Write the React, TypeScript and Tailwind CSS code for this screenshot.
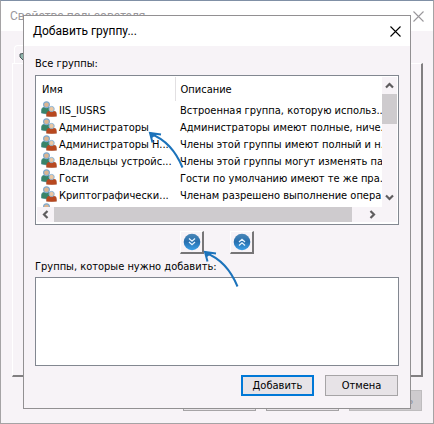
import React from 'react';

const groups = [
    { name: 'IIS_IUSRS', description: 'Встроенная группа, которую использ...' },
    { name: 'Администраторы', description: 'Администраторы имеют полные, ниче...' },
    { name: 'Администраторы H...', description: 'Члены этой группы имеют полный и н...' },
    { name: 'Владельцы устройс...', description: 'Члены этой группы могут изменять па...' },
    { name: 'Гости', description: 'Гости по умолчанию имеют те же пра...' },
    { name: 'Криптографически...', description: 'Членам разрешено выполнение опера...' },
    { name: '', description: '' },
];

const CloseIcon = () => (
    <svg viewBox="0 0 11 11" className="h-[11px] w-[11px]" fill="none" stroke="currentColor" strokeWidth="1.1">
        <path d="M.5 .5 10.5 10.5M10.5 .5 .5 10.5" />
    </svg>
);

const GroupIcon = () => (
    <svg viewBox="0 0 16 16" className="block h-4 w-4 shrink-0">
        <path d="M.3 12V9.500q.2-3.500 3.500-3.500h4q2.500 0 2.500 3v3.500q-5 1-10-.5z" fill="#388468" stroke="#4f8f9c" strokeWidth=".5" />
        <circle cx="5.500" cy="3.700" r="2.900" fill="#dcb591" stroke="#7fabd0" strokeWidth="1.200" />
        <path d="M5.500 15.300v-2q.3-3.300 3.500-3.300h3.500q3 0 3 3.300v2q-4.500.8-10 0z" fill="#b8481f" stroke="#a85030" strokeWidth=".5" />
        <circle cx="10.600" cy="8" r="2.600" fill="#ecc7a2" stroke="#8bb4d6" strokeWidth="1" />
    </svg>
);

const Chevron = ({ d }: { d: string }) => (
    <svg viewBox="0 0 9 9" className="h-[9px] w-[9px]" fill="none" stroke="#5f5d5f" strokeWidth="2.200">
        <path d={d} />
    </svg>
);

const MoveButton = ({ label, up = false }: { label: string; up?: boolean }) => (
    <button
        type="button"
        aria-label={label}
        className="flex h-[23px] w-6 items-center justify-center border-t border-r-2 border-b-2 border-l border-t-white border-r-[#777577] border-b-[#777577] border-l-white bg-[#f7f3f7]"
    >
        <svg viewBox="0 0 18 18" className="h-[18px] w-[18px] shrink-0">
            <defs>
                <linearGradient id={up ? 'ball-up' : 'ball-down'} x1="0" y1="0" x2="0" y2="1">
                    <stop offset="0" stopColor="#4b88b8" />
                    <stop offset=".48" stopColor="#2870ae" />
                    <stop offset="1" stopColor="#3ba0e8" />
                </linearGradient>
            </defs>
            <circle cx="9" cy="9" r="8.300" fill={`url(#${up ? 'ball-up' : 'ball-down'})`} />
            <path
                d={up ? 'M6 9 9 6.300 12 9M6 12.500 9 9.800 12 12.500' : 'M6 5.500 9 8.200 12 5.500M6 9 9 11.700 12 9'}
                fill="none"
                stroke="#e6f4ff"
                strokeWidth="1.300"
            />
        </svg>
    </button>
);

const Arrow = ({ className }: { className: string }) => (
    <svg viewBox="0 0 36 38" className={`pointer-events-none absolute h-[38px] w-9 ${className}`} fill="none" stroke="#1c73bb" strokeWidth="2">
        <path d="M3 3Q24 11 34.500 36.500" />
        <path d="M13 3.500 2 2 4.500 11.500" />
        <path d="M1.500 1.500 9 3 4 7z" fill="#1c73bb" stroke="none" />
    </svg>
);

// The properties window that stays disabled behind the dialog
const PropertiesWindow = () => (
    <div aria-hidden="true" className="absolute inset-0 flex flex-col border border-[#a5a3a5] border-t-[#8090a6] bg-[#f7f3f7]">
        <div className="flex h-[30px] shrink-0 items-center justify-between bg-white pr-[9px] pl-[9px] text-[#9a989c]">
            <span className="font-[Roboto,sans-serif] text-[12px]">Свойства пользователя</span>
            <CloseIcon />
        </div>
        <div className="flex h-8 shrink-0 items-end pl-[13px]">
            <div className="flex h-[18px] w-16 items-end rounded-t-sm border-t border-l border-white pl-1">
                <svg viewBox="0 0 10 10" className="h-[10px] w-[10px]">
                    <path d="M1 1 4 .5 9 6 6 9 1 4z" fill="#8fb5ac" stroke="#4b5558" />
                </svg>
            </div>
        </div>
        <div className="mr-[10px] ml-[11px] flex-1 border-t border-r-2 border-b-2 border-l border-t-white border-r-[#817f81] border-b-[#817f81] border-l-white" />
        <div className="mt-[13px] mr-[11px] mb-3 flex h-[21px] justify-end gap-[10px]">
            <div className="w-[73px] border border-[#a6a4a6] bg-[#e7e3e7]" />
            <div className="w-[73px] border border-[#a6a4a6] bg-[#e7e3e7]" />
            <div className="flex w-[73px] items-center justify-end border border-[#bebcbe] bg-[#cecbce] pr-2 text-[#8a8f9f]">ь</div>
        </div>
    </div>
);

const App = () => {
    return (
        <div className="relative min-h-screen overflow-hidden font-['DejaVu_Sans_Condensed','DejaVu_Sans',sans-serif] text-[11px] leading-[17px] text-black">
            <PropertiesWindow />

            <div role="dialog" aria-labelledby="dialog-title" className="relative mx-[23px] my-[15px] border border-[#929092] bg-[#f7f3f7]">
                <header className="flex h-[30px] items-center justify-between bg-white pr-[9px] pl-[9px]">
                    <h1 id="dialog-title" className="font-[Roboto,sans-serif] text-[12px]">Добавить группу...</h1>
                    <button type="button" aria-label="Закрыть">
                        <CloseIcon />
                    </button>
                </header>

                <div className="px-[11px] pt-[9px]">
                    <h2 id="all-groups" className="mb-[3px] h-[17px]">Все группы:</h2>
                    <div className="border border-[#828790] bg-white px-px pt-px pb-[2px]">
                        <div className="flex h-[130px]">
                            <div className="min-w-0 flex-1 overflow-hidden">
                                <table aria-labelledby="all-groups" className="w-full table-fixed text-left whitespace-nowrap">
                                    <thead>
                                        <tr className="h-6">
                                            <th className="w-[138px] border-r border-[#e2e0e2] p-0 pl-[5px] font-normal">Имя</th>
                                            <th className="p-0 pl-[5px] font-normal">Описание</th>
                                        </tr>
                                    </thead>
                                    <tbody className="leading-[19px]">
                                        {groups.map((group, i) => (
                                            <tr key={i} className="h-[17px]">
                                                <td className="p-0 pl-1">
                                                    <div className="flex h-[17px] gap-[2px]">
                                                        <GroupIcon />
                                                        <span>{group.name}</span>
                                                    </div>
                                                </td>
                                                <td className="p-0 pl-[5px]">
                                                    <div className="h-[17px]">{group.description}</div>
                                                </td>
                                            </tr>
                                        ))}
                                    </tbody>
                                </table>
                            </div>
                            <div className="flex w-[15px] flex-col items-center bg-[#f7f3f7]">
                                <div className="flex h-[17px] items-center"><Chevron d="M1 6.500 4.500 3 8 6.500" /></div>
                                <div className="h-[30px] w-full bg-[#cecbce]" />
                                <div className="mt-auto flex h-[19px] items-center"><Chevron d="M1 2.500 4.500 6 8 2.500" /></div>
                            </div>
                        </div>
                        <div className="flex h-[15px] items-center bg-[#f7f3f7] pr-[20px]">
                            <div className="flex w-[17px] justify-center"><Chevron d="M6.500 1 3 4.500 6.500 8" /></div>
                            <div className="h-full flex-1 bg-[#cecbce]" />
                            <div className="flex w-[25px] justify-end"><Chevron d="M2.500 1 6 4.500 2.500 8" /></div>
                        </div>
                    </div>

                    <div className="mt-[6px] flex justify-center gap-[26px]">
                        <MoveButton label="Добавить выбранную группу" />
                        <MoveButton label="Убрать выбранную группу" up />
                    </div>

                    <label htmlFor="selected" className="mt-1 mb-[2px] block">Группы, которые нужно добавить:</label>
                    <textarea id="selected" readOnly className="block h-[89px] w-full resize-none border border-[#828790] bg-white outline-none" />
                </div>

                <footer className="flex justify-end gap-[11px] px-3 pt-[9px] pb-3">
                    <button type="button" className="h-[21px] w-[73px] border-2 border-[#0078d7] bg-[#e7e3e7] leading-[17px]">Добавить</button>
                    <button type="button" className="h-[21px] w-[73px] border border-[#a6a4a6] bg-[#e7e3e7] leading-[17px]">Отмена</button>
                </footer>

                <Arrow className="top-[115px] left-[124px]" />
                <Arrow className="top-[234px] left-[179px]" />
            </div>
        </div>
    );
};

export default App;
